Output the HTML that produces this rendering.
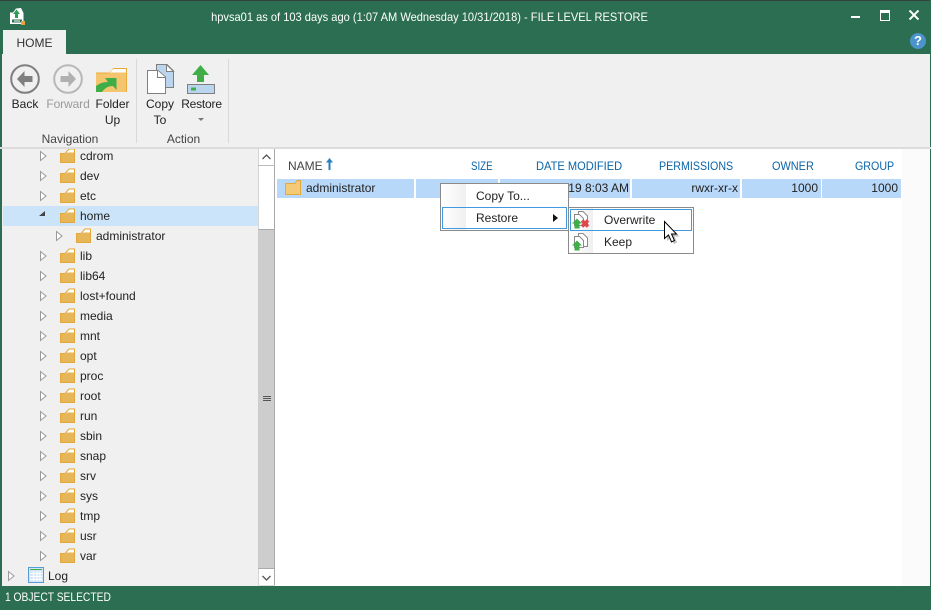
<!DOCTYPE html>
<html><head><meta charset="utf-8"><style>
html,body{margin:0;padding:0}
body{width:931px;height:610px;position:relative;overflow:hidden;background:#f0f0f0;font:12px "Liberation Sans",sans-serif;color:#222}
.a,.r,.t,.f,.e{position:absolute}
.t{white-space:nowrap;line-height:16px}
.h{color:#0a64a8;line-height:16px;position:absolute;white-space:nowrap;font-size:12px;transform-origin:0 50%}
.c{text-align:center}
.m{background:#fff;border:1px solid #8a8a8a;position:absolute;box-sizing:border-box}
</style></head><body>
<svg width="0" height="0" style="position:absolute"><defs>
<g id="fo"><path d="M.5 14.500V5.500H5L9 1H14.500V14.500Z" fill="#fff" stroke="#e2a93a"/><path d="M1 14V6H5.500L7 4.500H14V14Z" fill="#e6b658"/></g>
<g id="ar"><path d="M.5.5 6 5 .5 9.500Z" fill="#fff" stroke="#9a9a9a"/></g>
<g id="doc"><path d="M6.500.5H11L15.500 5V13.500H6.500Z" fill="#fff" stroke="#8a8a8a"/><path d="M2.500 3.500H7.500L11.500 7.500V14.500H2.500Z" fill="#fff" stroke="#8a8a8a"/></g>
<g id="gr"><path d="M5 0 10 5H7.500V10H2.500V5H0Z" fill="#3fae49"/></g>
</defs></svg>

<div class="a" style="left:0;top:0;width:931px;height:54px;background:#2c6e51"></div>
<div class="a" style="left:0;top:0;width:931px;height:1px;background:#33413c"></div>
<div class="a" style="left:0;top:54px;width:2px;height:532px;background:#2c6e51"></div>
<div class="a" style="left:930px;top:0;width:1px;height:610px;background:#2c6e51"></div>
<div class="a" style="left:0;top:586px;width:931px;height:24px;background:#2c6e51"></div>
<div class="t" style="left:5px;top:589px;color:#fff;transform:scaleX(.855);transform-origin:0 50%">1 OBJECT SELECTED</div>

<svg class="a" style="left:9px;top:7px" width="17" height="18"><path d="M1 5.500H4L7 1.500 12 1 14.500 6V17H1Z" fill="#fff"/><path d="M3 12.500H13V15.500H3Z" fill="#2c6e51"/><path d="M7.500 2.500 11 7H9V11H6V7H4Z" fill="#2c9e56"/><rect x="5" y="13.500" width="6" height="1" fill="#fff"/><rect x="12" y="14" width="4" height="4" fill="#e8a33a"/></svg>
<div class="t" style="left:0;top:9px;width:859px;text-align:center;color:#fff;transform:scaleX(.924)">hpvsa01 as of 103 days ago (1:07 AM Wednesday 10/31/2018) - FILE LEVEL RESTORE</div>
<div class="a" style="left:851px;top:16px;width:9px;height:2px;background:#fff"></div>
<div class="a" style="left:880px;top:10px;width:8px;height:7px;border:1px solid #fff;border-top-width:3px"></div>
<svg class="a" style="left:909px;top:10px" width="10" height="10"><path d="M.5.500 9.500 9.500M9.500.500.500 9.500" stroke="#fff" stroke-width="2"/></svg>
<div class="a" style="left:910px;top:33px;width:16px;height:16px;border-radius:50%;background:#4a94cb;color:#fff;font:bold 13px/16px 'Liberation Sans',sans-serif;text-align:center">?</div>

<div class="a" style="left:3px;top:30px;width:63px;height:25px;background:#f0f0f0"></div>
<div class="t" style="left:3px;top:35px;width:63px;text-align:center;color:#333">HOME</div>

<div class="a" style="left:136px;top:59px;width:1px;height:84px;background:#d9d9d9"></div>
<div class="a" style="left:228px;top:59px;width:1px;height:84px;background:#d9d9d9"></div>
<div class="a" style="left:0;top:147px;width:931px;height:2px;background:#dcdcdc"></div>

<svg class="a" style="left:10px;top:64px" width="30" height="30"><circle cx="15" cy="15" r="13.800" fill="#f0f0f0" stroke="#7f7f7f" stroke-width="2"/><path d="M14.500 7 7 15 14.500 23V18H22.500V12H14.500Z" fill="#7f7f7f"/></svg>
<svg class="a" style="left:53px;top:64px" width="30" height="30"><circle cx="15" cy="15" r="13.800" fill="#f0f0f0" stroke="#b8b8b8" stroke-width="2"/><path d="M15.500 7 23 15 15.500 23V18H7.500V12H15.500Z" fill="#b0b0b0"/></svg>
<svg class="a" style="left:96px;top:68px" width="32" height="26"><path d="M0 4.500H13L17 .5H30.500V24H0Z" fill="#f4c56e"/><path d="M13 4.500H0V5.500H12Z" fill="#e8ab3b"/><path d="M17.500 1H30V4.500H14Z" fill="#fff"/><path d="M17 .5H30.500V24" fill="none" stroke="#e8ab3b"/><path d="M0 24V18C4 15 8 14 12 14L9 10H20.500V22L17 18C12 18 9 20 6 24Z" fill="#3fae49"/></svg>
<div class="t" style="left:5px;top:96px;width:40px;text-align:center">Back</div>
<div class="t" style="left:46px;top:96px;width:44px;text-align:center;color:#9a9a9a;letter-spacing:-.1px">Forward</div>
<div class="t" style="left:90px;top:96px;width:45px;text-align:center">Folder</div>
<div class="t" style="left:90px;top:112px;width:45px;text-align:center">Up</div>
<div class="t" style="left:5px;top:131px;width:130px;text-align:center;color:#444">Navigation</div>

<svg class="a" style="left:147px;top:64px" width="28" height="31"><path d="M9.500.5H20L26.500 7V23.500H9.500Z" fill="#bcd5ee" stroke="#7f7f7f"/><path d="M19.500.5V7.500H26.500Z" fill="#fff" stroke="#7f7f7f"/><path d="M.5 6.500H11L18.500 13V29.500H.5Z" fill="#fff" stroke="#7f7f7f"/><path d="M10.500 6.500V13.500H18.500" fill="#fff" stroke="#7f7f7f"/></svg>
<svg class="a" style="left:187px;top:65px" width="29" height="30"><path d="M13.500 0 22 10H17V17H10V10H5Z" fill="#3fae49"/><rect x=".5" y="19.500" width="27" height="9" fill="#bcd5ee" stroke="#7f7f7f"/><rect x="4" y="22.500" width="5" height="3" fill="#3fae49"/></svg>
<div class="t" style="left:140px;top:96px;width:40px;text-align:center">Copy</div>
<div class="t" style="left:140px;top:112px;width:40px;text-align:center">To</div>
<div class="t" style="left:180px;top:96px;width:43px;text-align:center;letter-spacing:-.2px">Restore</div>
<div class="a" style="left:198px;top:118px;border:3px solid transparent;border-top:3px solid #777"></div>
<div class="t" style="left:140px;top:131px;width:87px;text-align:center;color:#444">Action</div>

<div class="a" style="left:3px;top:206px;width:255px;height:20px;background:#cce4f9"></div>
<svg class="a" style="left:0;top:149px" width="258" height="437">
<use href="#fo" x="60" y="-1"/><use href="#ar" x="40" y="2"/>
<use href="#fo" x="60" y="19"/><use href="#ar" x="40" y="22"/>
<use href="#fo" x="60" y="39"/><use href="#ar" x="40" y="42"/>
<use href="#fo" x="60" y="59"/><path d="M39 67 45 62V67Z" fill="#444"/>
<use href="#fo" x="76" y="79"/><use href="#ar" x="56" y="82"/>
<use href="#fo" x="60" y="99"/><use href="#ar" x="40" y="102"/>
<use href="#fo" x="60" y="119"/><use href="#ar" x="40" y="122"/>
<use href="#fo" x="60" y="139"/><use href="#ar" x="40" y="142"/>
<use href="#fo" x="60" y="159"/><use href="#ar" x="40" y="162"/>
<use href="#fo" x="60" y="179"/><use href="#ar" x="40" y="182"/>
<use href="#fo" x="60" y="199"/><use href="#ar" x="40" y="202"/>
<use href="#fo" x="60" y="219"/><use href="#ar" x="40" y="222"/>
<use href="#fo" x="60" y="239"/><use href="#ar" x="40" y="242"/>
<use href="#fo" x="60" y="259"/><use href="#ar" x="40" y="262"/>
<use href="#fo" x="60" y="279"/><use href="#ar" x="40" y="282"/>
<use href="#fo" x="60" y="299"/><use href="#ar" x="40" y="302"/>
<use href="#fo" x="60" y="319"/><use href="#ar" x="40" y="322"/>
<use href="#fo" x="60" y="339"/><use href="#ar" x="40" y="342"/>
<use href="#fo" x="60" y="359"/><use href="#ar" x="40" y="362"/>
<use href="#fo" x="60" y="379"/><use href="#ar" x="40" y="382"/>
<use href="#fo" x="60" y="399"/><use href="#ar" x="40" y="402"/>
<use href="#ar" x="8" y="422"/>
<rect x="28.500" y="418.500" width="15" height="15" fill="#d4e6f7" stroke="#5b9bd5"/><rect x="30" y="420" width="12" height="1" fill="#3fae49"/><path d="M30 424.500H42M30 427.500H42M30 430.500H42M33.500 422V432M37 422V432M40 422V432" stroke="#fff"/>
</svg>
<div class="t" style="left:80px;top:148px">cdrom</div>
<div class="t" style="left:80px;top:168px">dev</div>
<div class="t" style="left:80px;top:188px">etc</div>
<div class="t" style="left:80px;top:208px">home</div>
<div class="t" style="left:96px;top:228px">administrator</div>
<div class="t" style="left:80px;top:248px">lib</div>
<div class="t" style="left:80px;top:268px">lib64</div>
<div class="t" style="left:80px;top:288px">lost+found</div>
<div class="t" style="left:80px;top:308px">media</div>
<div class="t" style="left:80px;top:328px">mnt</div>
<div class="t" style="left:80px;top:348px">opt</div>
<div class="t" style="left:80px;top:368px">proc</div>
<div class="t" style="left:80px;top:388px">root</div>
<div class="t" style="left:80px;top:408px">run</div>
<div class="t" style="left:80px;top:428px">sbin</div>
<div class="t" style="left:80px;top:448px">snap</div>
<div class="t" style="left:80px;top:468px">srv</div>
<div class="t" style="left:80px;top:488px">sys</div>
<div class="t" style="left:80px;top:508px">tmp</div>
<div class="t" style="left:80px;top:528px">usr</div>
<div class="t" style="left:80px;top:548px">var</div>
<div class="t" style="left:48px;top:568px">Log</div>

<div class="a" style="left:258px;top:149px;width:17px;height:437px;background:#fff;box-sizing:border-box;border-left:1px solid #d4d4d4;border-right:1px solid #aaa"></div>
<div class="a" style="left:258px;top:229px;width:17px;height:340px;background:#cdcdcd;box-sizing:border-box;border:1px solid #aaa;border-left-color:#ccc"></div>
<div class="a" style="left:258px;top:165px;width:17px;height:1px;background:#bbb"></div>
<div class="a" style="left:258px;top:585px;width:17px;height:1px;background:#ddd"></div>
<div class="a" style="left:263px;top:396px;width:8px;height:1px;background:#555;box-shadow:0 2px #555,0 4px #555"></div>
<svg class="a" style="left:258px;top:149px" width="17" height="17"><path d="M4.500 10 8.500 6 12.500 10" fill="none" stroke="#555" stroke-width="1.300"/></svg>
<svg class="a" style="left:258px;top:569px" width="17" height="17"><path d="M4.500 7 8.500 11 12.500 7" fill="none" stroke="#555" stroke-width="1.300"/></svg>

<div class="a" style="left:275px;top:149px;width:627px;height:437px;background:#fff"></div>
<div class="a" style="left:902px;top:149px;width:28px;height:437px;background:#fbfbfb"></div>

<div class="t" style="left:288px;top:158px;color:#444">NAME</div>
<svg class="a" style="left:325px;top:158px" width="9" height="13"><path d="M4.500 0 8 4.500H5.500V12H3.500V4.500H1Z" fill="#2a7fc0"/></svg>
<div class="h" style="left:471px;top:158px;transform:scaleX(.81)">SIZE</div>
<div class="h" style="left:536px;top:158px;transform:scaleX(.925)">DATE MODIFIED</div>
<div class="h" style="left:659px;top:158px;transform:scaleX(.89)">PERMISSIONS</div>
<div class="h" style="left:772px;top:158px;transform:scaleX(.91)">OWNER</div>
<div class="h" style="left:855px;top:158px;transform:scaleX(.89)">GROUP</div>

<div class="a" style="left:277px;top:179px;width:137px;height:19px;background:#b7d8f8"></div>
<div class="a" style="left:416px;top:179px;width:82px;height:19px;background:#b7d8f8"></div>
<div class="a" style="left:500px;top:179px;width:130px;height:19px;background:#b7d8f8"></div>
<div class="a" style="left:632px;top:179px;width:108px;height:19px;background:#b7d8f8"></div>
<div class="a" style="left:742px;top:179px;width:79px;height:19px;background:#b7d8f8"></div>
<div class="a" style="left:822px;top:179px;width:79px;height:19px;background:#b7d8f8"></div>
<svg class="a" style="left:285px;top:180px" width="17" height="15"><path d="M.5 14.500V3.500H10L12 .5H15.500V14.500Z" fill="#f5ca77" stroke="#e6a93a"/></svg>
<div class="t" style="left:306px;top:180px">administrator</div>
<div class="t" style="left:560px;top:180px;width:69px;text-align:right">019 8:03 AM</div>
<div class="t" style="left:640px;top:180px;width:98px;text-align:right">rwxr-xr-x</div>
<div class="t" style="left:750px;top:180px;width:68px;text-align:right">1000</div>
<div class="t" style="left:830px;top:180px;width:68px;text-align:right">1000</div>

<div class="m" style="left:440px;top:183px;width:129px;height:48px"></div>
<div class="a" style="left:441px;top:184px;width:25px;height:46px;background:linear-gradient(90deg,#fff,#f0f0f0)"></div>
<div class="t" style="left:476px;top:188px">Copy To...</div>
<div class="a" style="left:442px;top:207px;width:125px;height:22px;border:1px solid #3f9ae0;box-sizing:border-box"></div>
<div class="t" style="left:476px;top:210px">Restore</div>
<div class="a" style="left:553px;top:214px;border:4px solid transparent;border-left:5px solid #111;border-right:0"></div>

<div class="m" style="left:568px;top:207px;width:126px;height:47px"></div>
<div class="a" style="left:569px;top:208px;width:24px;height:45px;background:linear-gradient(90deg,#fff,#f0f0f0)"></div>
<div class="a" style="left:570px;top:209px;width:122px;height:22px;border:1px solid #3f9ae0;box-sizing:border-box"></div>
<svg class="a" style="left:572px;top:211px" width="18" height="18"><use href="#doc"/><use href="#gr" x="0" y="7.500"/><path d="M10 9.500 16 15.500M16 9.500 10 15.500" stroke="#e0474c" stroke-width="3.500"/></svg>
<div class="t" style="left:604px;top:212px">Overwrite</div>
<svg class="a" style="left:572px;top:233px" width="18" height="18"><use href="#doc"/><use href="#gr" x="0" y="7.500"/></svg>
<div class="t" style="left:604px;top:234px">Keep</div>
<svg class="a" style="left:662px;top:220px" width="20" height="26"><path d="M3 3V20L7 16.500 10 23 13 21.500 10.500 15.500H15.500Z" fill="#000" opacity=".25" transform="translate(2 1)"/><path d="M2.500 1.500V18.500L6.500 15 9.500 22 12.500 20.500 9.500 14H14.500Z" fill="#fff" stroke="#000"/></svg>
</body></html>
